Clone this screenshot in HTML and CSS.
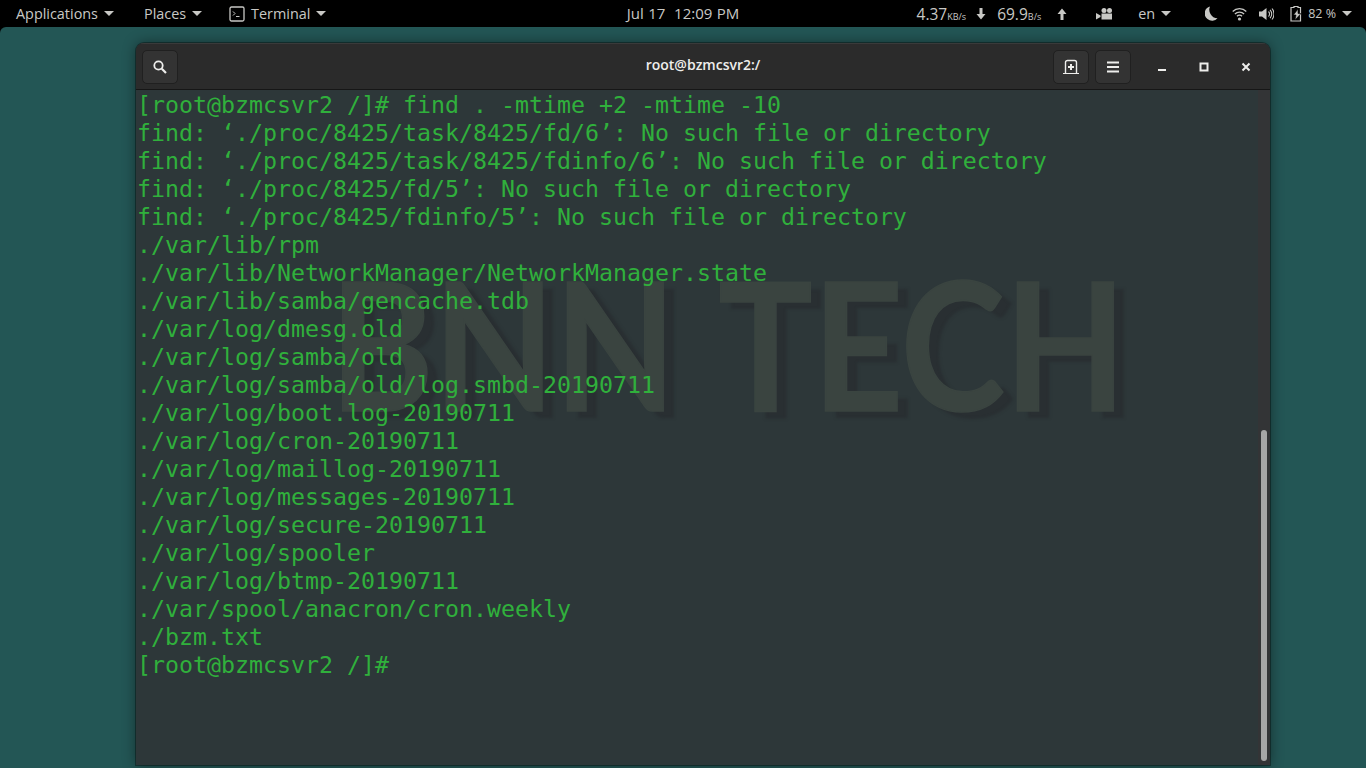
FILE: index.html
```html
<!DOCTYPE html>
<html lang="en">
<head>
<meta charset="utf-8">
<title>root@bzmcsvr2:/</title>
<link rel="stylesheet" href="styles.css">
</head>
<body>
<header class="topbar">
  <div class="bar-left">
    <span class="menu menu-apps">Applications<i class="caret"></i></span>
    <span class="menu menu-places">Places<i class="caret"></i></span>
    <span class="menu menu-term">
      <svg class="ic-term" width="16" height="16" viewBox="0 0 16 16"><rect x="1" y="1" width="14" height="14" rx="1.5" fill="none" stroke="#c8c8c5" stroke-width="1.3"/><path d="M4 5.500 6 7.500 4 9.500M7 10.500h3.500" fill="none" stroke="#c8c8c5"/></svg>
      Terminal<i class="caret"></i></span>
  </div>
  <div class="clock">Jul 17&nbsp; 12:09 PM</div>
  <div class="bar-right">
    <span class="net"><b>4.37</b><small>KB/s</small></span>
    <svg class="ic-arrow-d" width="10" height="12" viewBox="0 0 10 12"><path d="M3.500 0h3v6H9.500L5 11.500.5 6h3z" fill="#c8c8c5"/></svg>
    <span class="net net2"><b>69.9</b><small>B/s</small></span>
    <svg class="ic-arrow-u" width="10" height="12" viewBox="0 0 10 12"><path d="M3.500 12h3V6H9.500L5 .5.500 6h3z" fill="#c8c8c5"/></svg>
    <svg class="ic-cam" width="17" height="12" viewBox="0 0 17 12"><circle cx="8" cy="2.500" r="2.500" fill="#c8c8c5"/><circle cx="13.500" cy="2.500" r="2.500" fill="#c8c8c5"/><path d="M5.500 5.500h10.500v6H5.500zM0 5l4.500 2.500v1.500L0 11.500z" fill="#c8c8c5"/></svg>
    <span class="lang">en<i class="caret"></i></span>
    <svg class="ic-moon" width="13" height="15" viewBox="0 0 13 15"><path d="M5 .5A8 8 0 0 0 5.500 8 8 8 0 0 0 12.500 12.200 7.100 7.100 0 0 1 2.500 13 7.100 7.100 0 0 1 5 .5z" fill="#c8c8c5"/></svg>
    <svg class="ic-wifi" width="15" height="14" viewBox="0 0 15 14"><path d="M.7 4.500a9.500 9.500 0 0 1 13.600 0M2.900 7a6.400 6.400 0 0 1 9.200 0M5 9.300a3.400 3.400 0 0 1 5 0" fill="none" stroke="#c8c8c5" stroke-width="1.300"/><circle cx="7.500" cy="12" r="1.600" fill="#c8c8c5"/></svg>
    <svg class="ic-vol" width="15" height="14" viewBox="0 0 15 14"><path d="M0 4.500h3L7.500 1v12L3 9.500H0z" fill="#c8c8c5"/><path d="M9.500 4.500a3.500 3.500 0 0 1 0 5M11 2.800a6 6 0 0 1 0 8.400M13 1.500a8.500 8.500 0 0 1 0 11" fill="none" stroke="#c8c8c5" stroke-width="1.100"/></svg>
    <svg class="ic-batt" width="13" height="16" viewBox="0 0 13 16"><path d="M4 1.500V.5h4v1h2.500v13.500H1V1.500z" fill="none" stroke="#c8c8c5" stroke-width="1.200"/><path d="M8 3 3.500 9H6l-1 5 6-6.500H8z" fill="#c8c8c5" stroke="#000" stroke-width=".6"/></svg>
    <span class="pct">82 %<i class="caret"></i></span>
  </div>
</header>
<main class="desktop">
  <section class="window">
    <div class="titlebar">
      <button class="btn btn-search"><svg width="16" height="16" viewBox="0 0 16 16"><circle cx="6.500" cy="6.500" r="4.200" fill="none" stroke="#eeeeec" stroke-width="1.800"/><path d="M9.800 9.800 14 14" stroke="#eeeeec" stroke-width="2.200"/></svg></button>
      <div class="title">root@bzmcsvr2:/</div>
      <div class="actions">
        <button class="btn"><svg width="16" height="16" viewBox="0 0 16 16"><path d="M2.500 14V3.500a2 2 0 0 1 2-2h7a2 2 0 0 1 2 2V14" fill="none" stroke="#eeeeec" stroke-width="1.400"/><path d="M0 14.500h16" stroke="#eeeeec" stroke-width="1.200"/><path d="M8 5v6M5 8h6" stroke="#eeeeec" stroke-width="2"/></svg></button>
        <button class="btn"><svg width="12" height="12" viewBox="0 0 12 12"><path d="M0 .5h12v2H0zM0 5h12v2H0zM0 9.500h12v2H0z" fill="#eeeeec"/></svg></button>
      </div>
      <div class="wm">
        <span class="wm-btn"><svg width="10" height="10" viewBox="0 0 10 10"><path d="M1 7h8v2H1z" fill="#eeeeec"/></svg></span>
        <span class="wm-btn"><svg width="10" height="10" viewBox="0 0 10 10"><path d="M1.500 1.500h7v7h-7z" fill="none" stroke="#eeeeec" stroke-width="2"/></svg></span>
        <span class="wm-btn"><svg width="10" height="10" viewBox="0 0 10 10"><path d="M1.500 1.500l7 7M8.500 1.500l-7 7" stroke="#eeeeec" stroke-width="2"/></svg></span>
      </div>
    </div>
    <div class="term-wrap">
      <div class="term">
        <div class="watermark">BNN TECH</div>
<pre class="output">[root@bzmcsvr2 /]# find . -mtime +2 -mtime -10
find: ‘./proc/8425/task/8425/fd/6’: No such file or directory
find: ‘./proc/8425/task/8425/fdinfo/6’: No such file or directory
find: ‘./proc/8425/fd/5’: No such file or directory
find: ‘./proc/8425/fdinfo/5’: No such file or directory
./var/lib/rpm
./var/lib/NetworkManager/NetworkManager.state
./var/lib/samba/gencache.tdb
./var/log/dmesg.old
./var/log/samba/old
./var/log/samba/old/log.smbd-20190711
./var/log/boot.log-20190711
./var/log/cron-20190711
./var/log/maillog-20190711
./var/log/messages-20190711
./var/log/secure-20190711
./var/log/spooler
./var/log/btmp-20190711
./var/spool/anacron/cron.weekly
./bzm.txt
[root@bzmcsvr2 /]#</pre>
      </div>
      <div class="scroll"><div class="thumb"></div></div>
    </div>
  </section>
</main>
</body>
</html>
```
FILE: styles.css
```css
* { box-sizing: border-box; }
html, body { margin: 0; height: 100%; }
body {
  width: 1366px;
  height: 768px;
  overflow: hidden;
  background: #000;
  display: flex;
  flex-direction: column;
  font-family: "Open Sans", "Noto Sans", sans-serif;
}
.topbar {
  height: 27px;
  flex: none;
  background: #000;
  color: #c8c8c5;
  font-size: 14.4px;
  font-weight: 500;
  display: grid;
  grid-template-columns: 1fr auto 1fr;
  align-items: center;
}
.bar-left { display: flex; align-items: center; padding-left: 16px; }
.menu { display: inline-flex; align-items: center; }
.menu-places { margin-left: 30px; }
.menu-term { margin-left: 27px; }
.ic-term { margin-right: 6px; }
.caret {
  display: inline-block;
  width: 0; height: 0;
  border-left: 5px solid transparent;
  border-right: 5px solid transparent;
  border-top: 5px solid #c8c8c5;
  margin-left: 6px;
}
.clock { font-size: 15px; margin-top: -1px; word-spacing: .5px; }
.bar-right { display: flex; align-items: center; justify-content: flex-end; padding-right: 14px; }
.net { white-space: nowrap; }
.net b { font-weight: 400; font-size: 15.500px; }
.net small { font-size: 9px; }
.ic-arrow-d { margin-left: 10px; }
.net2 { margin-left: 11px; }
.ic-arrow-u { margin-left: 16px; }
.ic-cam { margin-left: 29px; }
.lang { margin-left: 25px; display: inline-flex; align-items: center; }
.ic-moon { margin-left: 34px; }
.ic-wifi { margin-left: 14px; }
.ic-vol { margin-left: 12px; }
.ic-batt { margin-left: 16px; }
.pct { margin-left: 5px; font-size: 12.500px; display: inline-flex; align-items: center; }
.desktop {
  flex: 1;
  background: #235655;
  border-radius: 6px 6px 0 0;
  padding: 16px 96px 3px 136px;
  display: flex;
  min-height: 0;
}
.window {
  width: 1134px;
  height: 722px;
  background: #2d3739;
  border-radius: 8px 8px 0 0;
  box-shadow: 0 0 14px rgba(0,0,0,.45), 0 0 0 1px rgba(0,0,0,.35);
  display: flex;
  flex-direction: column;
  overflow: hidden;
}
.titlebar {
  height: 47px;
  flex: none;
  background: #2b2b2b;
  border-top: 1px solid #3a3a3a;
  border-bottom: 1px solid #161616;
  display: flex;
  align-items: center;
  padding-left: 6px;
  position: relative;
}
.btn {
  width: 36px;
  height: 34px;
  padding: 0;
  background: #333;
  border: 1px solid #202020;
  border-radius: 5px;
  display: flex;
  align-items: center;
  justify-content: center;
}
.title {
  position: absolute;
  left: 0; right: 0;
  top: 11px;
  text-align: center;
  color: #eeeeec;
  font-size: 14px;
  font-weight: 600;
  pointer-events: none;
}
.actions { margin-left: auto; display: flex; gap: 6px; }
.wm { display: flex; margin-left: 10px; padding-right: 3px; }
.wm-btn { width: 42px; height: 34px; display: flex; align-items: center; justify-content: center; }
.term-wrap { flex: 1; display: flex; min-height: 0; }
.term { flex: 1; position: relative; overflow: hidden; }
.scroll { width: 12px; flex: none; background: #333436; padding: 0 3px 4px; display: flex; flex-direction: column; justify-content: flex-end; }
.thumb { height: 331px; width: 6px; background: #a6a6a6; border-radius: 3px; }
.watermark {
  position: absolute;
  left: 194px;
  top: 127px;
  font-family: Lato, sans-serif;
  font-size: 179px;
  line-height: 250px;
  font-weight: 700;
  word-spacing: 10px;
  color: #3a4440;
  -webkit-text-stroke: 1.5px #3a4440;
  text-shadow: 12px 7px 3px #292f32;
  white-space: nowrap;
  transform: scaleX(.879);
  transform-origin: left top;
}
.output {
  position: relative;
  margin: 0;
  padding: 1px 0 0 1px;
  font-family: "DejaVu Sans Mono", monospace;
  font-size: 23.25px;
  line-height: 28px;
  color: #30b03c;
}
```
